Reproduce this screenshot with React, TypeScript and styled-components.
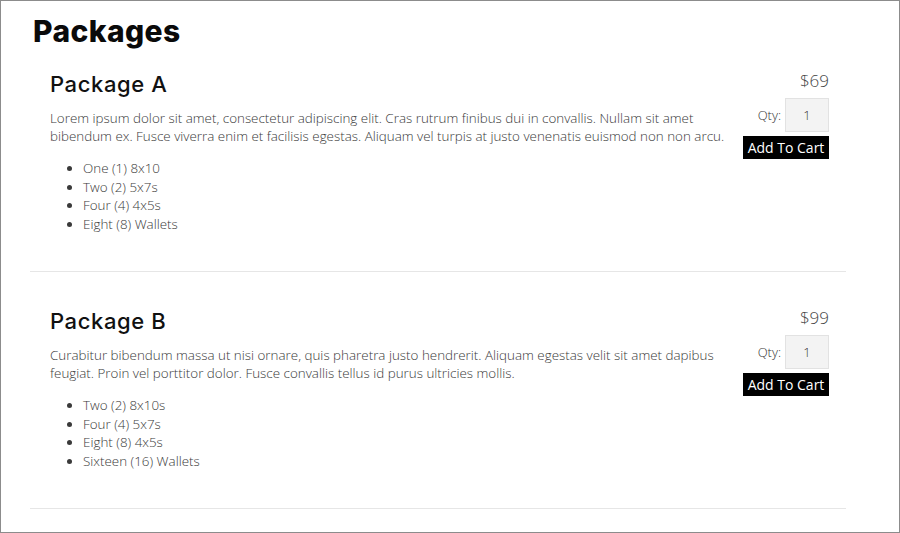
import styled, { createGlobalStyle } from 'styled-components';

const GlobalStyle = createGlobalStyle`
  html, body {
    margin: 0;
    padding: 0;
    background: #ffffff;
  }
  * {
    box-sizing: border-box;
  }
`;

type PackageItem = {
  name: string;
  price: string;
  description: string;
  items: string[];
};

const packages: PackageItem[] = [
  {
    name: 'Package A',
    price: '$69',
    description:
      'Lorem ipsum dolor sit amet, consectetur adipiscing elit. Cras rutrum finibus dui in convallis. Nullam sit amet bibendum ex. Fusce viverra enim et facilisis egestas. Aliquam vel turpis at justo venenatis euismod non non arcu.',
    items: ['One (1) 8x10', 'Two (2) 5x7s', 'Four (4) 4x5s', 'Eight (8) Wallets'],
  },
  {
    name: 'Package B',
    price: '$99',
    description:
      'Curabitur bibendum massa ut nisi ornare, quis pharetra justo hendrerit. Aliquam egestas velit sit amet dapibus feugiat. Proin vel porttitor dolor. Fusce convallis tellus id purus ultricies mollis.',
    items: ['Two (2) 8x10s', 'Four (4) 5x7s', 'Eight (8) 4x5s', 'Sixteen (16) Wallets'],
  },
];

const App = () => {
  return (
    <>
      <GlobalStyle />
      <Page>
        <Title>Packages</Title>
        <List>
          {packages.map((pkg) => (
            <Package key={pkg.name}>
              <Info>
                <Name>{pkg.name}</Name>
                <Description>{pkg.description}</Description>
                <Contents>
                  {pkg.items.map((item) => (
                    <li key={item}>{item}</li>
                  ))}
                </Contents>
              </Info>
              <Order>
                <Price>{pkg.price}</Price>
                <QtyRow>
                  <QtyLabel>Qty:</QtyLabel>
                  <QtyInput type="text" defaultValue="1" />
                </QtyRow>
                <CartButton type="button">Add To Cart</CartButton>
              </Order>
            </Package>
          ))}
        </List>
      </Page>
    </>
  );
};

const Page = styled.main`
  height: 533px;
  padding: 10px 53px 0 29px;
  border: 1px solid #8c8c8c;
  background: #ffffff;
  overflow: hidden;
`;

const Title = styled.h1`
  margin: 0 0 0 3px;

  color: #0a0a0a;
  font-family: Inter, 'Noto Sans', sans-serif;
  font-size: 30px;
  font-weight: 800;
  letter-spacing: 0.4px;
  line-height: 40px;
`;

const List = styled.div`
  display: flex;
  flex-direction: column;
`;

const Package = styled.section`
  display: flex;
  gap: 16px;
  padding: 19px 17px 38px 20px;

  border-bottom: 1px solid #e6e6e6;

  & + & {
    padding-top: 35px;
  }
`;

const Info = styled.div`
  flex: 1;
`;

const Name = styled.h2`
  margin: 0 0 11px;

  color: #111111;
  font-family: Inter, 'Noto Sans', sans-serif;
  font-size: 22px;
  font-weight: 500;
  letter-spacing: 0.6px;
  line-height: 28px;
`;

const Description = styled.p`
  margin: 0 0 14px;

  color: #3a3a3a;
  font-family: 'Open Sans', sans-serif;
  font-size: 13.4px;
  font-weight: 300;
  line-height: 18px;
`;

const Contents = styled.ul`
  margin: 0;
  padding-left: 33px;

  color: #3a3a3a;
  font-family: 'Open Sans', sans-serif;
  font-size: 13.4px;
  font-weight: 300;
  line-height: 18.5px;
`;

const Order = styled.div`
  display: flex;
  flex-direction: column;
  align-items: flex-end;
  width: 86px;
`;

const Price = styled.div`
  margin-bottom: 6px;

  color: #444444;
  font-family: 'Open Sans', sans-serif;
  font-size: 17px;
  font-weight: 300;
  line-height: 22px;
`;

const QtyRow = styled.div`
  display: flex;
  align-items: center;
  gap: 4px;
  margin-bottom: 4px;
`;

const QtyLabel = styled.span`
  color: #333333;
  font-family: 'Open Sans', sans-serif;
  font-size: 13px;
  font-weight: 300;
`;

const QtyInput = styled.input`
  width: 44px;
  height: 34px;
  padding: 0;

  border: 1px solid #e2e2e2;
  background: #f3f3f3;
  color: #333333;
  font-family: 'Open Sans', sans-serif;
  font-size: 13px;
  font-weight: 300;
  text-align: center;
`;

const CartButton = styled.button`
  width: 86px;
  height: 23px;
  padding: 0;

  border: none;
  background: #000000;
  color: #ffffff;
  font-family: 'Open Sans', sans-serif;
  font-size: 14px;
  font-weight: 400;
  line-height: 23px;
`;

export default App;
